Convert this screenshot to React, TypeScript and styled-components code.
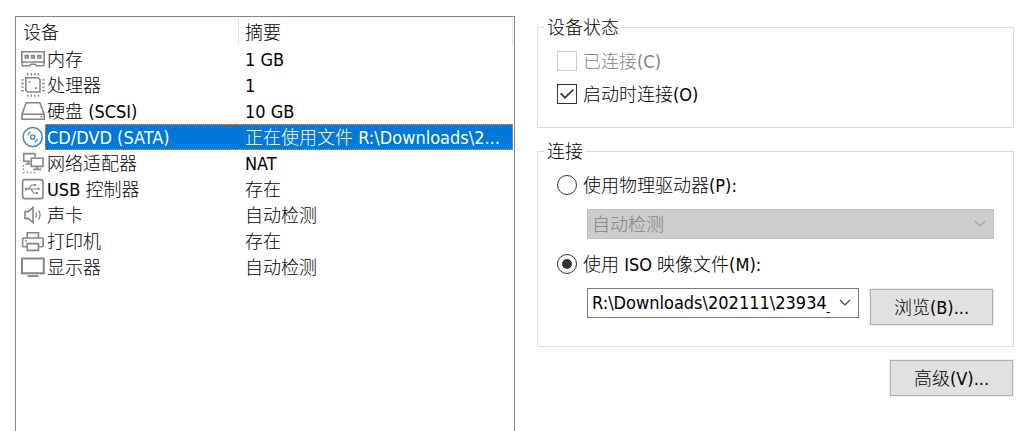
import React, { useState } from "react";
import styled, { createGlobalStyle, css } from "styled-components";

const GlobalStyle = createGlobalStyle`
  * { box-sizing: border-box; }
  body {
    margin: 0;
    background: #fff;
    color: #000;
    font: 300 18px/20px "DejaVu Sans Condensed", "Noto Sans CJK SC", sans-serif;
  }
  button, select, input { font: inherit; color: inherit; }
`;

const Page = styled.main`
  display: grid;
  grid-template-columns: 500fr 477fr;
  gap: 22px;
  min-height: 100vh;
  padding: 16px 15px 0;
`;

const DevicePanel = styled.section`
  padding: 1px 1px 0 0;
  border: 1px solid #828790;
  border-bottom: 0;
  min-width: 0;
`;

const DeviceTable = styled.table`
  width: 100%;
  table-layout: fixed;
  border-collapse: separate;
  border-spacing: 0;
`;

const IconColumn = styled.col`
  width: 29px;
`;

const NameColumn = styled.col`
  width: 194px;
`;

const HeaderCell = styled.th`
  height: 28px;
  padding: 2px 7px 0;
  border-right: 1px solid #e5e5e5;
  font-weight: 300;
  text-align: left;
  & + & { padding-left: 6px; }
`;

const DeviceRow = styled.tr`
  height: 26px;
  cursor: default;
`;

const IconCell = styled.td`
  padding: 0;
`;

const TextCell = styled.td<{ $selected: boolean; $edge: "left" | "right" }>`
  height: 26px;
  padding: ${(p) => (p.$edge === "left" ? "2px 0 0 1px" : "2px 6px 0 6px")};
  border: 1px none transparent;
  border-style: solid;
  border-left-width: ${(p) => (p.$edge === "left" ? "1px" : "0")};
  border-right-width: ${(p) => (p.$edge === "right" ? "1px" : "0")};
  overflow: hidden;
  text-overflow: ellipsis;
  white-space: nowrap;
  ${(p) =>
    p.$selected &&
    css`
      background: #0078d7;
      color: #fff;
      border-style: dotted;
      border-color: #ff8728;
    `}
`;

const Glyph = styled.svg`
  display: block;
  width: 29px;
  height: 26px;
  fill: none;
  stroke: #858585;
  stroke-width: 1.6;
`;

const Settings = styled.form`
  display: flex;
  flex-direction: column;
  gap: 12px;
  min-width: 0;
`;

const Group = styled.fieldset<{ $bottom: number }>`
  display: flex;
  flex-direction: column;
  min-width: 0;
  margin: 0;
  padding: 13px 19px ${(p) => p.$bottom}px;
  border: 1px solid #dcdcdc;
`;

const Legend = styled.legend`
  margin-left: -13px;
  padding: 2px 3px 0;
`;

const Stack = styled.div<{ $gap: number }>`
  display: flex;
  flex-direction: column;
  gap: ${(p) => p.$gap}px;
`;

const Choice = styled.label<{ $disabled?: boolean }>`
  display: flex;
  align-items: center;
  gap: 6px;
  height: 20px;
  color: ${(p) => (p.$disabled ? "#838383" : "#000")};
`;

const Caption = styled.span`
  padding-top: 2px;
`;

const Mark = styled.input`
  appearance: none;
  flex: none;
  display: grid;
  place-items: center;
  width: 20px;
  height: 20px;
  margin: 0;
  background: #fff;
  border: 1px solid #333;
  &:disabled { border-color: #ccc; }
`;

const Tick = styled(Mark)`
  &:checked::before {
    content: "";
    width: 14px;
    height: 10px;
    background: #333;
    clip-path: polygon(0 50%, 9% 38%, 36% 76%, 91% 0, 100% 11%, 36% 100%);
  }
`;

const Radio = styled(Mark)`
  border-radius: 50%;
  &:checked::before {
    content: "";
    width: 10px;
    height: 10px;
    border-radius: 50%;
    background: #333;
  }
`;

const Indented = styled.div`
  display: flex;
  align-items: flex-start;
  gap: 10px;
  padding: 0 0 1px 30px;
`;

const SelectBox = styled.div`
  position: relative;
  flex: 1;
  min-width: 0;
`;

const Select = styled.select`
  appearance: none;
  display: block;
  width: 100%;
  height: 30px;
  padding: 0 28px 0 4px;
  border: 1px solid #7a7a7a;
  border-radius: 0;
  background: #fff;
  &:disabled {
    opacity: 1;
    padding-top: 2px;
    color: #838383;
    background: #ccc;
    border-color: #bfbfbf;
  }
`;

const Chevron = styled.svg<{ $disabled?: boolean }>`
  position: absolute;
  top: 11px;
  right: 8px;
  width: 12px;
  height: 8px;
  fill: none;
  stroke: ${(p) => (p.$disabled ? "#a0a0a0" : "#444")};
  stroke-width: 1.2;
  pointer-events: none;
`;

const Button = styled.button`
  flex: none;
  width: 125px;
  height: 38px;
  padding: 2px 0 0;
  border: 1px solid #f0f0f0;
  background: #e1e1e1;
  box-shadow: inset 0 0 0 1px #adadad;
`;

const Footer = styled.div`
  display: flex;
  justify-content: flex-end;
`;

const icons: Record<string, React.ReactNode> = {
  memory: (
    <>
      <path d="M5.8 5.8H28.2V16H5.8ZM6.3 16V19.7H13.5L15 18.2H19L20.5 19.7H27.7V16" />
      <path d="M9.3 9.6h2.8v2.4h-2.8ZM15.6 9.6h2.8v2.4h-2.8ZM21.9 9.6h2.8v2.4h-2.8Z" />
    </>
  ),
  cpu: (
    <>
      <path d="M9.8 5.8H22L24 7.8V20H11.6L9.8 18.2Z" />
      <path d="M11 2.2H24M11 23.6H24" strokeWidth="2.4" strokeDasharray="1.4 2.2" />
      <path d="M6.4 7.2V20M27.4 7.2V20" strokeWidth="2.4" strokeDasharray="1.4 2.2" />
      <path d="M12.6 9.8h1.8M19 16.2h1.8" strokeWidth="1.8" />
    </>
  ),
  disk: (
    <path d="M6 16.2 10.2 4.8H23.8L28.2 16.2V21.2H6V16.2H28.2M24.5 18.8h1.6" />
  ),
  disc: (
    <g stroke="#3c87c0" strokeWidth="1.3">
      <circle cx="16.7" cy="13" r="9.6" strokeWidth="1.5" />
      <circle cx="16.7" cy="13" r="2.2" />
      <path d="M11.9 11.3A5.2 5.2 0 0 1 14.6 8.2M21.5 14.7A5.2 5.2 0 0 1 18.8 17.8" />
    </g>
  ),
  network: (
    <>
      <path d="M14.5 11.2H7.8V3.6H19V7.5M12.4 11.2V14M9.4 14H14.5" />
      <path d="M15.3 8.2H27V16.4H15.3ZM21.2 16.4V19.4M17.2 19.4H25.2" />
      <path d="M7.4 15V22.5H20" strokeDasharray="1.4 2.2" strokeWidth="1.4" />
    </>
  ),
  usb: (
    <>
      <rect x="6.6" y="3.6" width="20.4" height="19" rx="2.4" />
      <path d="M10.5 13H23M12.8 13 15.6 9H18.5M14.8 13 17.6 17H20.5" strokeWidth="1.2" />
      <path d="M9 11.7h2.6v2.6H9ZM18 8h2v2h-2ZM20 16h2v2h-2ZM22 11.4V14.6L24.6 13Z" fill="#858585" stroke="none" />
    </>
  ),
  sound: (
    <>
      <path d="M9 9.6H12.2L17 5.5V20.5L12.2 16.4H9Z" />
      <path d="M19.8 10.2Q21.4 13 19.8 15.8M22.6 8.4Q25.6 13 22.6 17.6" strokeWidth="1.3" />
    </>
  ),
  printer: (
    <>
      <path d="M11.2 10V4.8H22.5V10M11.2 18.8H7.8Q6.6 18.8 6.6 17.6V11.2Q6.6 10 7.8 10H26Q27.2 10 27.2 11.2V17.6Q27.2 18.8 26 18.8H22.5" />
      <path d="M11.2 15.6H22.5V22.4H11.2ZM9.2 12.8h1.6" />
    </>
  ),
  display: (
    <>
      <path d="M6 4.4H27.8V19.2H6Z" strokeWidth="2" />
      <path d="M11.5 22H22.5" strokeWidth="1.8" />
    </>
  ),
};

const devices = [
  { icon: "memory", name: "内存", summary: "1 GB" },
  { icon: "cpu", name: "处理器", summary: "1" },
  { icon: "disk", name: "硬盘 (SCSI)", summary: "10 GB" },
  { icon: "disc", name: "CD/DVD (SATA)", summary: "正在使用文件 R:\\Downloads\\2..." },
  { icon: "network", name: "网络适配器", summary: "NAT" },
  { icon: "usb", name: "USB 控制器", summary: "存在" },
  { icon: "sound", name: "声卡", summary: "自动检测" },
  { icon: "printer", name: "打印机", summary: "存在" },
  { icon: "display", name: "显示器", summary: "自动检测" },
];

export default function App() {
  const [selected, setSelected] = useState(3);
  const [autoConnect, setAutoConnect] = useState(true);
  const [source, setSource] = useState("iso");

  return (
    <>
      <GlobalStyle />
      <Page>
        <DevicePanel>
          <DeviceTable>
            <colgroup>
              <IconColumn />
              <NameColumn />
              <col />
            </colgroup>
            <thead>
              <tr>
                <HeaderCell colSpan={2} scope="col">设备</HeaderCell>
                <HeaderCell scope="col">摘要</HeaderCell>
              </tr>
            </thead>
            <tbody>
              {devices.map((device, index) => (
                <DeviceRow key={device.name} onClick={() => setSelected(index)}>
                  <IconCell>
                    <Glyph viewBox="0 0 29 26" aria-hidden="true">{icons[device.icon]}</Glyph>
                  </IconCell>
                  <TextCell $selected={index === selected} $edge="left">{device.name}</TextCell>
                  <TextCell $selected={index === selected} $edge="right">{device.summary}</TextCell>
                </DeviceRow>
              ))}
            </tbody>
          </DeviceTable>
        </DevicePanel>

        <Settings onSubmit={(e) => e.preventDefault()}>
          <Group $bottom={23}>
            <Legend>设备状态</Legend>
            <Stack $gap={13}>
              <Choice $disabled>
                <Tick type="checkbox" disabled />
                <Caption>已连接(C)</Caption>
              </Choice>
              <Choice>
                <Tick
                  type="checkbox"
                  checked={autoConnect}
                  onChange={(e) => setAutoConnect(e.target.checked)}
                />
                <Caption>启动时连接(O)</Caption>
              </Choice>
            </Stack>
          </Group>

          <Group $bottom={19}>
            <Legend>连接</Legend>
            <Stack $gap={14}>
              <Choice>
                <Radio
                  type="radio"
                  name="source"
                  checked={source === "drive"}
                  onChange={() => setSource("drive")}
                />
                <Caption>使用物理驱动器(P):</Caption>
              </Choice>
              <Indented>
                <SelectBox>
                  <Select aria-label="使用物理驱动器" disabled={source !== "drive"}>
                    <option>自动检测</option>
                  </Select>
                  <Chevron viewBox="0 0 12 8" $disabled={source !== "drive"} aria-hidden="true">
                    <path d="M1 1 6 6 11 1" />
                  </Chevron>
                </SelectBox>
              </Indented>
              <Choice>
                <Radio
                  type="radio"
                  name="source"
                  checked={source === "iso"}
                  onChange={() => setSource("iso")}
                />
                <Caption>使用 ISO 映像文件(M):</Caption>
              </Choice>
              <Indented>
                <SelectBox>
                  <Select aria-label="使用 ISO 映像文件" disabled={source !== "iso"}>
                    <option>{"R:\\Downloads\\202111\\23934_"}</option>
                  </Select>
                  <Chevron viewBox="0 0 12 8" $disabled={source !== "iso"} aria-hidden="true">
                    <path d="M1 1 6 6 11 1" />
                  </Chevron>
                </SelectBox>
                <Button type="button">浏览(B)...</Button>
              </Indented>
            </Stack>
          </Group>

          <Footer>
            <Button type="button">高级(V)...</Button>
          </Footer>
        </Settings>
      </Page>
    </>
  );
}
